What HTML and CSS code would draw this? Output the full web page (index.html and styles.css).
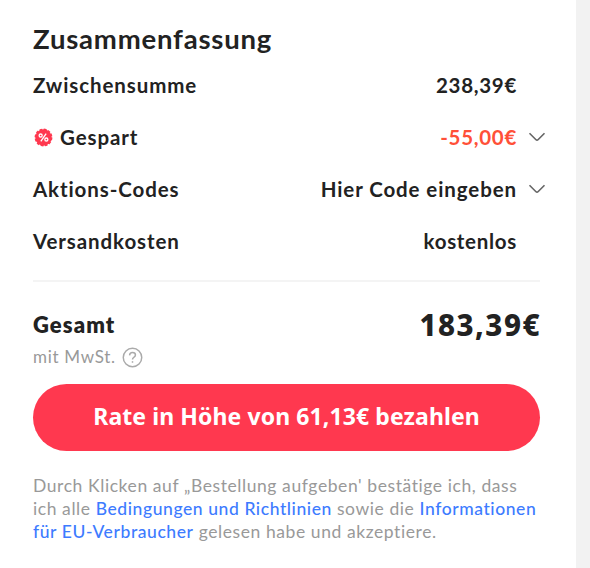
FILE: index.html
```
<!DOCTYPE html>
<html lang="de">
<head>
  <meta charset="UTF-8">
  <title>Zusammenfassung</title>
  <link rel="stylesheet" href="styles.css">
</head>
<body>

<div class="resumen">
  <h2>Zusammenfassung</h2>

  <div class="fila">
    <span>Zwischensumme</span>
    <span class="valor numero">238,39€</span>
  </div>

  <div class="fila">
    <span class="etiqueta">
      <svg class="insignia" viewBox="0 0 20 20">
        <circle cx="10" cy="10" r="8.6" fill="#ff384f" stroke="#ff384f" stroke-width="1.6" stroke-dasharray="3 1.5"/>
        <g fill="none" stroke="#fff" stroke-width="1.4">
          <circle cx="7" cy="7.9" r="1.6"/>
          <circle cx="13" cy="12.1" r="1.6"/>
          <path d="M12.8 5.8 L7.2 14.2"/>
        </g>
      </svg>
      <span>Gespart</span>
    </span>
    <span class="valor numero descuento">-55,00€</span>
    <svg class="flecha" viewBox="0 0 18 12"><path d="M1.5 2.2 L8 8.7 Q9 9.7 10 8.7 L16.5 2.2"/></svg>
  </div>

  <div class="fila">
    <span>Aktions-Codes</span>
    <span class="valor">Hier Code eingeben</span>
    <svg class="flecha" viewBox="0 0 18 12"><path d="M1.5 2.2 L8 8.7 Q9 9.7 10 8.7 L16.5 2.2"/></svg>
  </div>

  <div class="fila">
    <span>Versandkosten</span>
    <span class="valor numero">kostenlos</span>
  </div>

  <div class="total">
    <span class="gesamt">Gesamt</span>
    <span class="importe">183,39€</span>
  </div>

  <div class="impuestos">
    <span>mit MwSt.</span>
    <svg class="ayuda" viewBox="0 0 20 20">
      <circle cx="10" cy="10" r="8.8"/>
      <path d="M7.2 8 Q7.3 5.3 10 5.3 Q12.8 5.3 12.8 7.7 Q12.8 9 11.2 9.8 Q10 10.4 10 12"/>
      <path d="M10 13.5 V15"/>
    </svg>
  </div>

  <button class="pagar">Rate in Höhe von 61,13€ bezahlen</button>

  <p class="aviso">
    Durch Klicken auf „Bestellung aufgeben' bestätige ich, dass<br>
    ich alle <a>Bedingungen und Richtlinien</a> sowie die <a>Informationen</a><br>
    <a>für EU-Verbraucher</a> gelesen habe und akzeptiere.
  </p>
</div>

</body>
</html>
```
FILE: styles.css
```
* {
  box-sizing: border-box;
}

body {
  margin: 0;
  background-color: #f2f2f2;
  color: #222;
  font-family: Lato, sans-serif;
}

.resumen {
  width: 576px;
  height: 568px;
  padding: 19px 36px 0 33px;
  background-color: #fff;
}

h2 {
  margin: 0;
  height: 40px;
  line-height: 40px;
  font-size: 27.5px;
  font-weight: 700;
  letter-spacing: 0.8px;
}

.fila {
  display: flex;
  align-items: center;
  height: 52px;
  margin-right: -6px;
  font-size: 20.5px;
  font-weight: 700;
  letter-spacing: 0.9px;
}

.valor {
  margin-left: auto;
  margin-right: 29px;
}

.valor:not(:last-child) {
  margin-right: 11px;
}

.numero {
  letter-spacing: 0.7px;
}

.descuento {
  color: #ff5038;
}

.etiqueta {
  display: flex;
  align-items: center;
  gap: 7px;
}

.insignia {
  width: 19px;
  height: 19px;
  margin: 1px 0 0 1px;
}

.flecha {
  width: 18px;
  height: 12px;
  fill: none;
  stroke: #666;
  stroke-width: 1.6;
}

.total {
  display: flex;
  align-items: center;
  justify-content: space-between;
  height: 64px;
  margin-top: 13px;
  padding-top: 22px;
  border-top: 2px solid #f4f4f4;
  font-size: 22px;
  font-weight: 800;
}

.gesamt {
  padding-top: 1px;
  letter-spacing: 1.1px;
}

.importe {
  margin-right: -1px;
  font-family: "Noto Sans", sans-serif;
  font-size: 29.5px;
  letter-spacing: 1.5px;
}

.impuestos {
  display: flex;
  align-items: center;
  gap: 6px;
  height: 24px;
  color: #999;
  font-size: 17px;
  letter-spacing: 0.7px;
}

.ayuda {
  width: 21px;
  height: 21px;
  margin-top: 2px;
  fill: none;
  stroke: #aaa;
  stroke-width: 1.4;
}

.pagar {
  display: block;
  width: 507px;
  height: 67px;
  margin-top: 16px;
  padding: 0 0 3px;
  border: none;
  border-radius: 34px;
  background-color: #ff384f;
  color: #fff;
  font-family: "Noto Sans", sans-serif;
  font-size: 23px;
  font-weight: 700;
  letter-spacing: 0.1px;
}

.aviso {
  margin: 23px 0 0;
  color: #999;
  font-size: 17.5px;
  letter-spacing: 0.58px;
  line-height: 23px;
  white-space: nowrap;
}

.aviso a {
  color: #3d7bff;
  font-weight: 500;
}
```
